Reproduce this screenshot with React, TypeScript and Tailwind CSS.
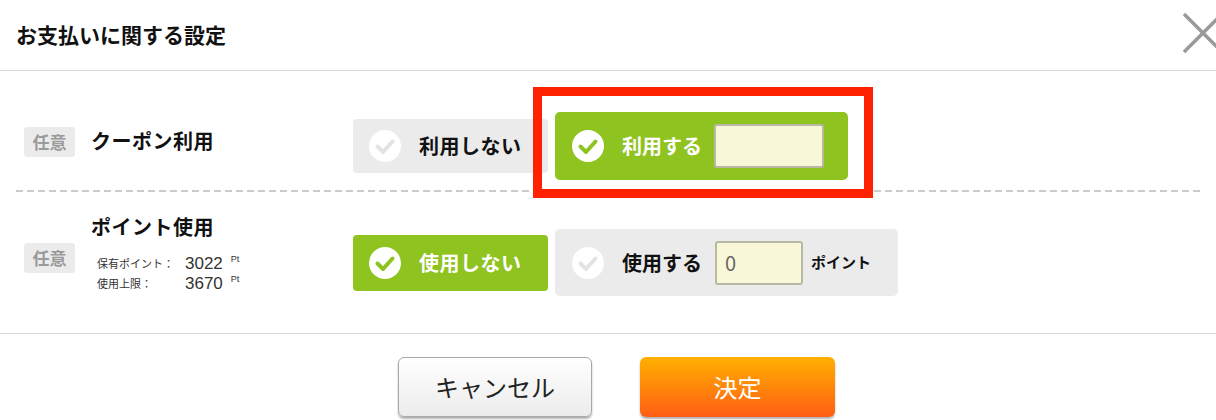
import React from "react";

function CheckCircle({ active }: { active: boolean }) {
  return (
    <svg width="32" height="32" viewBox="0 0 32 32" className="shrink-0">
      <circle cx="16" cy="16" r="16" fill="#fff" />
      <path
        d="M8.5 16.5 L14 22 L23.5 11.5"
        fill="none"
        stroke={active ? "#8fc31f" : "#e3e3e3"}
        strokeWidth="4"
        strokeLinecap="round"
        strokeLinejoin="round"
      />
    </svg>
  );
}

function Badge() {
  return (
    <span className="ml-2 flex h-[30px] w-[51px] shrink-0 items-center justify-center rounded-[3px] bg-[#ebebeb] text-[17px] font-bold text-[#9a9a9a]">
      任意
    </span>
  );
}

function PointLine({ label, value }: { label: string; value: string }) {
  return (
    <div className="flex h-[20px] items-center text-[#333]">
      <span className="w-[94px] pl-[6px] text-[11px] leading-[14px]">{label}</span>
      <span className="font-['Liberation_Sans',sans-serif] text-[17px] leading-none">{value}</span>
      <span className="mb-[8px] ml-[8px] font-['Liberation_Sans',sans-serif] text-[9px] leading-none">Pt</span>
    </div>
  );
}

export default function App() {
  return (
    <div className="h-[420px] w-[1216px] overflow-hidden bg-white font-['Noto_Sans_CJK_JP','Noto_Sans',sans-serif] text-[#111]">
      {/* header */}
      <div className="relative flex h-[71px] items-center border-b border-[#d9d9d9] px-4 pb-[1px]">
        <h1 className="text-[21px] font-bold">お支払いに関する設定</h1>
        <svg className="absolute right-[-8px] top-[12px]" width="42" height="42" viewBox="0 0 42 42">
          <path d="M2 2 L40 40 M40 2 L2 40" stroke="#9a9a9a" strokeWidth="3.5" />
        </svg>
      </div>

      <div className="px-4">
        {/* coupon row */}
        <div className="flex items-center pb-[10px] pt-[41px]">
          <div className="mb-[8px] flex w-[337px] shrink-0 items-center">
            <Badge />
            <span className="mb-[2px] ml-4 text-[20px] font-bold tracking-[0.5px]">クーポン利用</span>
          </div>
          <div className="flex items-center gap-[7px]">
            <button className="flex h-[54px] w-[195px] items-center gap-[18px] rounded-[4px] bg-[#ebebeb] pl-4 text-[20px] font-bold tracking-[0.5px] text-[#111]">
              <CheckCircle active={false} />
              利用しない
            </button>
            <div className="relative">
              <button className="flex h-[68px] w-[293px] items-center rounded-[5px] bg-[#8fc31f] pl-[17px] text-[20px] font-bold text-white">
                <CheckCircle active />
                <span className="ml-[18px]">利用する</span>
                <span className="ml-[12px] h-[44px] w-[110px] rounded-[3px] border-2 border-[#b9b9a3] bg-[#f8f8d8]" />
              </button>
              <div className="pointer-events-none absolute bottom-[-18px] left-[-22px] right-[-25px] top-[-25px] border-[9px] border-[#ff2200]" />
            </div>
          </div>
        </div>

        <div className="h-[2px] bg-[repeating-linear-gradient(to_right,#cbcbcb_0_7px,transparent_7px_11px)]" />

        {/* point row */}
        <div className="flex h-[141px] items-center">
          <div className="flex w-[337px] shrink-0 items-center">
            <div className="mb-[9px]">
              <Badge />
            </div>
            <div className="mb-[18px] ml-4">
              <div className="text-[20px] font-bold leading-[26px] tracking-[0.5px]">ポイント使用</div>
              <div className="mt-[13px]">
                <PointLine label="保有ポイント：" value="3022" />
                <PointLine label="使用上限：" value="3670" />
              </div>
            </div>
          </div>
          <div className="flex items-center gap-[7px]">
            <button className="flex h-[56px] w-[195px] items-center gap-[18px] rounded-[4px] bg-[#8fc31f] pl-4 text-[20px] font-bold tracking-[0.5px] text-white">
              <CheckCircle active />
              使用しない
            </button>
            <div className="flex h-[67px] w-[343px] items-center rounded-[5px] bg-[#ebebeb] pl-[17px] text-[20px] font-bold">
              <CheckCircle active={false} />
              <span className="ml-[18px]">使用する</span>
              <span className="ml-[13px] flex h-[44px] w-[88px] items-center rounded-[3px] border-2 border-[#b9b9a3] bg-[#f8f8d8] pl-[8px] text-[20px] font-normal text-[#666]">
                0
              </span>
              <span className="ml-[8px] text-[15px]">ポイント</span>
            </div>
          </div>
        </div>
      </div>

      <div className="border-t border-[#d9d9d9]" />

      {/* footer buttons */}
      <div className="flex justify-center gap-[48px] pl-[17px] pt-[23px]">
        <button className="h-[60px] w-[194px] rounded-[6px] border border-[#a8a8a8] bg-[linear-gradient(to_bottom,#ffffff,#ececec)] text-[24px] text-[#222] shadow-[0_2px_2px_rgba(0,0,0,0.3)]">
          キャンセル
        </button>
        <button className="h-[60px] w-[195px] rounded-[6px] bg-[linear-gradient(to_bottom,#ffb000,#ff5e15)] text-[24px] text-white shadow-[0_2px_2px_rgba(0,0,0,0.3)]">
          決定
        </button>
      </div>
    </div>
  );
}
